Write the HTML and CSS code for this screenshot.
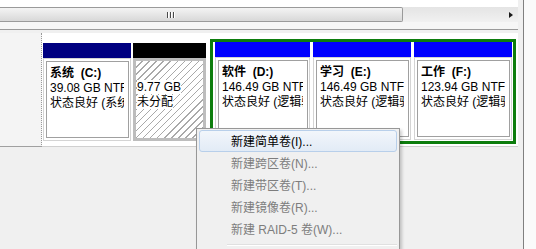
FILE: index.html
```html
<!DOCTYPE html>
<html lang="zh-CN">
<head>
    <meta charset="UTF-8">
    <title>磁盘管理</title>
    <link rel="stylesheet" href="styles.css">
</head>
<body>
    <div class="window">
        <div class="pane">
            <div class="top-gap"></div>
            <div class="hscroll">
                <div class="thumb"><span class="grip"><i></i><i></i><i></i></span></div>
                <div class="track"><span class="arrow"></span></div>
            </div>
            <div class="under"></div>
            <div class="disk">
                <div class="disk-label"></div>
                <div class="parts">
                    <div class="part part-c">
                        <div class="bar bar-primary"></div>
                        <div class="body">
                            <div class="box">
                                <div class="txt">
                                    <b>系统&nbsp;&nbsp;(C:)</b><br>
                                    39.08 GB NTFS<br>
                                    状态良好 (系统, 启动, 页面文件, 活动, 主分区)
                                </div>
                            </div>
                        </div>
                    </div>
                    <div class="part part-free">
                        <div class="bar bar-free"></div>
                        <div class="body hatch">
                            <div class="txt">
                                <br>
                                <span>9.77 GB</span><br>
                                <span>未分配</span>
                            </div>
                        </div>
                    </div>
                    <div class="extended">
                        <div class="part part-d">
                            <div class="bar bar-logical"></div>
                            <div class="body">
                                <div class="box">
                                    <div class="txt">
                                        <b>软件&nbsp;&nbsp;(D:)</b><br>
                                        146.49 GB NTFS<br>
                                        状态良好 (逻辑驱动器)
                                    </div>
                                </div>
                            </div>
                        </div>
                        <div class="part part-e">
                            <div class="bar bar-logical"></div>
                            <div class="body">
                                <div class="box">
                                    <div class="txt">
                                        <b>学习&nbsp;&nbsp;(E:)</b><br>
                                        146.49 GB NTFS<br>
                                        状态良好 (逻辑驱动器)
                                    </div>
                                </div>
                            </div>
                        </div>
                        <div class="part part-f">
                            <div class="bar bar-logical"></div>
                            <div class="body">
                                <div class="box">
                                    <div class="txt">
                                        <b>工作&nbsp;&nbsp;(F:)</b><br>
                                        123.94 GB NTFS<br>
                                        状态良好 (逻辑驱动器)
                                    </div>
                                </div>
                            </div>
                        </div>
                    </div>
                </div>
            </div>
        </div>
        <div class="edge"><div class="edge-line"></div></div>

        <!-- context menu over the unallocated space -->
        <div class="menu">
            <div class="item active">新建简单卷(I)...</div>
            <div class="item disabled">新建跨区卷(N)...</div>
            <div class="item disabled">新建带区卷(T)...</div>
            <div class="item disabled">新建镜像卷(R)...</div>
            <div class="item disabled">新建 RAID-5 卷(W)...</div>
            <div class="sep"></div>
        </div>
    </div>
</body>
</html>
```
FILE: styles.css
```css
body {
    margin: 0;
    width: 536px;
    height: 249px;
    overflow: hidden;
    font-family: "Liberation Sans", "Noto Sans CJK SC", sans-serif;
    font-size: 12px;
    color: #000;
    background: #f0f0f0;
}
.window {
    position: relative;
    display: flex;
    height: 249px;
    overflow: hidden;
}
.pane {
    width: 518px;
}
.edge {
    width: 18px;
    display: flex;
    background: #fafafa;
}
.edge-line {
    width: 5px;
    background: #f0f0f0;
    border-right: 1px solid #808080;
}
.top-gap {
    height: 7px;
    background: #fff;
}
.hscroll {
    display: flex;
    height: 15px;
    background: #e8e8e8;
}
.thumb {
    width: 403px;
    box-sizing: border-box;
    border: 1px solid #9a9a9a;
    border-left: none;
    border-radius: 0 2px 2px 0;
    background: linear-gradient(#f4f4f4, #e6e6e6 50%, #d8d8d8);
    display: flex;
    align-items: center;
    padding-left: 167px;
}
.grip {
    display: flex;
    gap: 1px;
}
.grip i {
    width: 1px;
    height: 6px;
    background: #4a4a4a;
    border-right: 1px solid #fff;
}
.track {
    flex: 1;
    background: linear-gradient(#e4e4e4, #f1f1f1);
    display: flex;
    justify-content: flex-end;
    align-items: center;
    padding-right: 5px;
}
.arrow {
    width: 0;
    height: 0;
    border-top: 3px solid transparent;
    border-bottom: 3px solid transparent;
    border-left: 4px solid #1a1a1a;
}
.under {
    height: 7px;
    background: #f6f6f6;
    border-bottom: 1px solid #9a9a9a;
    margin-bottom: 3px;
}
.disk {
    display: flex;
    height: 114px;
}
.disk-label {
    width: 41px;
    background: #f4f4f4;
    border-right: 1px dotted #9a9a9a;
    border-bottom: 1px solid #a0a0a0;
}
.parts {
    flex: 1;
    display: flex;
    align-items: flex-start;
    background: #fff;
    padding: 10px 0 0 1px;
    border-bottom: 1px solid #d0d0d0;
}
.part {
    display: flex;
    flex-direction: column;
}
.part-c {
    width: 88px;
}
.part-free {
    width: 73px;
    margin-left: 2px;
}
.part-d {
    width: 95px;
}
.part-e,
.part-f {
    width: 98px;
}
.bar {
    height: 15px;
}
.bar-primary {
    background: #000080;
}
.bar-free {
    background: #000;
}
.bar-logical {
    background: #0000ff;
}
.body {
    height: 83px;
    box-sizing: border-box;
    background: #fff;
    border: 1px solid #d4d4d4;
    padding: 2px 1px 2px 2px;
}
.box {
    height: 100%;
    box-sizing: border-box;
    border: 1px solid #a0a0a0;
    padding: 4px 4px 0 3px;
}
.txt {
    line-height: 15px;
    white-space: nowrap;
    overflow: hidden;
}
.hatch {
    border: 3px solid #bdbdbd;
    padding: 4px 4px 0 1px;
    background: repeating-linear-gradient(135deg, #fff 0 4px, #a9a9a9 4px 5px);
}
.hatch span {
    background: #fff;
}
.extended {
    display: flex;
    gap: 3px;
    margin: -4px 0 0 4px;
    border: 3px solid #0d7d0d;
    padding: 0 1px 1px 2px;
    background: #fff;
}
.menu {
    position: absolute;
    left: 196px;
    top: 128px;
    width: 204px;
    height: 121px;
    box-sizing: border-box;
    border: 1px solid #979797;
    border-bottom: none;
    background: #f0f0f0;
    padding: 1px 2px 0;
    box-shadow: 2px 2px 3px rgba(0, 0, 0, 0.2);
}
.item {
    height: 22px;
    line-height: 22px;
    padding-left: 31px;
    border: 1px solid transparent;
    box-sizing: border-box;
    white-space: nowrap;
}
.item.active {
    border-color: #b8cfea;
    border-radius: 3px;
    background: linear-gradient(#f2f6fb, #e2ebf6);
}
.item.disabled {
    color: #7d7d7d;
}
.sep {
    height: 1px;
    margin: 4px 0 0 28px;
    background: #e0e0e0;
    border-bottom: 1px solid #fff;
}
```
